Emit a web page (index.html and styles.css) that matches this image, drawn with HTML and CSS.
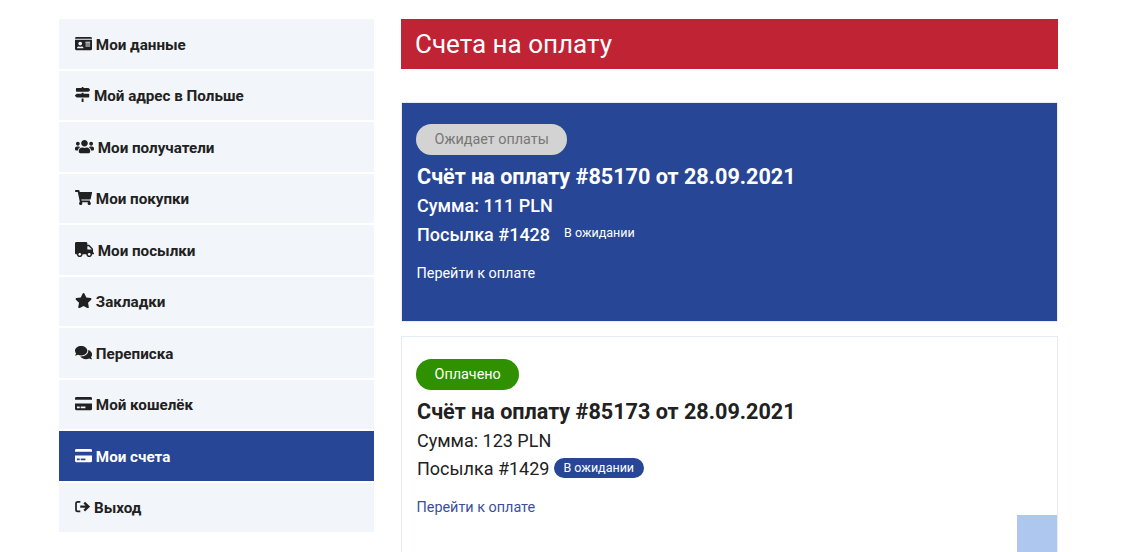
FILE: index.html
```html
<!DOCTYPE html>
<html lang="ru">
<head>
<meta charset="utf-8">
<title>Счета на оплату</title>
<link rel="stylesheet" href="styles.css">
</head>
<body>
<div class="layout">
  <nav class="side">
    <a class="item"><svg class="ic" viewBox="0 0 576 512"><path d="M528 32H48C21.5 32 0 53.5 0 80v16h576V80c0-26.5-21.5-48-48-48zM0 432c0 26.5 21.5 48 48 48h480c26.5 0 48-21.5 48-48V128H0v304zm352-232c0-4.4 3.6-8 8-8h144c4.4 0 8 3.6 8 8v16c0 4.4-3.6 8-8 8H360c-4.4 0-8-3.6-8-8v-16zm0 64c0-4.4 3.6-8 8-8h144c4.4 0 8 3.6 8 8v16c0 4.4-3.6 8-8 8H360c-4.4 0-8-3.6-8-8v-16zm0 64c0-4.4 3.6-8 8-8h144c4.4 0 8 3.6 8 8v16c0 4.4-3.6 8-8 8H360c-4.4 0-8-3.6-8-8v-16zM176 192c35.3 0 64 28.7 64 64s-28.7 64-64 64-64-28.7-64-64 28.7-64 64-64zM67.1 396.2C75.5 370.5 99.6 352 128 352h8.2c12.3 5.1 25.7 8 39.8 8s27.6-2.9 39.8-8h8.2c28.4 0 52.5 18.5 60.9 44.2 3.2 9.9-5.2 19.8-15.6 19.8H82.7c-10.4 0-18.8-10-15.6-19.8z"/></svg> Мои данные</a>
    <a class="item"><svg class="ic" viewBox="0 0 512 512"><path d="M507.31 84.69L464 41.37c-6-6-14.14-9.37-22.63-9.37H288V16c0-8.84-7.16-16-16-16h-32c-8.84 0-16 7.16-16 16v16H56c-13.25 0-24 10.75-24 24v80c0 13.25 10.75 24 24 24h385.37c8.49 0 16.62-3.37 22.63-9.37l43.31-43.31c6.25-6.26 6.25-16.38 0-22.63zM224 496c0 8.84 7.16 16 16 16h32c8.84 0 16-7.16 16-16V384h-64v112zm232-272H288v-32h-64v32H70.63c-8.49 0-16.62 3.37-22.63 9.37L4.69 276.69c-6.25 6.25-6.25 16.38 0 22.63L48 342.63c6 6 14.14 9.37 22.63 9.37H456c13.25 0 24-10.75 24-24v-80c0-13.25-10.75-24-24-24z"/></svg> Мой адрес в Польше</a>
    <a class="item"><svg class="ic" viewBox="0 0 640 512"><path d="M96 224c35.3 0 64-28.7 64-64s-28.7-64-64-64-64 28.7-64 64 28.7 64 64 64zm448 0c35.3 0 64-28.7 64-64s-28.7-64-64-64-64 28.7-64 64 28.7 64 64 64zm32 32h-64c-17.6 0-33.5 7.1-45.1 18.6 40.3 22.1 68.9 62 75.1 109.4h66c17.7 0 32-14.3 32-32v-32c0-35.3-28.7-64-64-64zm-256 0c61.9 0 112-50.1 112-112S381.9 32 320 32 208 82.1 208 144s50.1 112 112 112zm76.8 32h-8.3c-20.8 10-43.9 16-68.5 16s-47.6-6-68.5-16h-8.3C179.6 288 128 339.6 128 403.2V432c0 26.5 21.5 48 48 48h288c26.5 0 48-21.5 48-48v-28.8c0-63.6-51.6-115.2-115.2-115.2zm-223.7-13.4C161.5 263.1 145.6 256 128 256H64c-35.3 0-64 28.7-64 64v32c0 17.7 14.3 32 32 32h65.9c6.3-47.4 34.9-87.3 75.2-109.4z"/></svg> Мои получатели</a>
    <a class="item"><svg class="ic" viewBox="0 0 576 512"><path d="M528.12 301.319l47.273-208C578.806 78.301 567.391 64 551.99 64H159.208l-9.166-44.81C147.758 8.021 137.93 0 126.529 0H24C10.745 0 0 10.745 0 24v16c0 13.255 10.745 24 24 24h69.883l70.248 343.435C147.325 417.1 136 435.222 136 456c0 30.928 25.072 56 56 56s56-25.072 56-56c0-15.674-6.447-29.835-16.824-40h209.647C430.447 426.165 424 440.326 424 456c0 30.928 25.072 56 56 56s56-25.072 56-56c0-22.172-12.888-41.332-31.579-50.405l5.517-24.276c3.413-15.018-8.002-29.319-23.403-29.319H218.117l-6.545-32h293.145c11.206 0 20.92-7.754 23.403-18.681z"/></svg> Мои покупки</a>
    <a class="item"><svg class="ic" viewBox="0 0 640 512"><path d="M624 352h-16V243.9c0-12.7-5.1-24.9-14.1-33.9L494 110.1c-9-9-21.2-14.1-33.9-14.1H416V48c0-26.5-21.5-48-48-48H48C21.5 0 0 21.5 0 48v320c0 26.5 21.5 48 48 48h16c0 53 43 96 96 96s96-43 96-96h128c0 53 43 96 96 96s96-43 96-96h48c8.8 0 16-7.2 16-16v-32c0-8.8-7.2-16-16-16zM160 464c-26.5 0-48-21.5-48-48s21.5-48 48-48 48 21.5 48 48-21.5 48-48 48zm320 0c-26.5 0-48-21.5-48-48s21.5-48 48-48 48 21.5 48 48-21.5 48-48 48zm80-208H416V144h44.1l99.9 99.9V256z"/></svg> Мои посылки</a>
    <a class="item"><svg class="ic" viewBox="0 0 576 512"><path d="M259.3 17.8L194 150.2 47.9 171.5c-26.2 3.8-36.7 36.1-17.7 54.6l105.7 103-25 145.5c-4.5 26.3 23.2 46 46.4 33.7L288 439.6l130.7 68.7c23.2 12.2 50.9-7.4 46.4-33.7l-25-145.5 105.7-103c19-18.5 8.5-50.8-17.7-54.6L382 150.2 316.7 17.8c-11.7-23.6-45.6-23.9-57.4 0z"/></svg> Закладки</a>
    <a class="item"><svg class="ic" viewBox="0 0 576 512"><path d="M416 192c0-88.4-93.1-160-208-160S0 103.6 0 192c0 34.3 14.1 65.9 38 92-13.4 30.2-35.5 54.2-35.8 54.5-2.2 2.3-2.8 5.7-1.5 8.7S4.8 352 8 352c36.6 0 66.9-12.3 88.7-25 32.2 15.7 70.3 25 111.3 25 114.9 0 208-71.6 208-160zm122 220c23.9-26 38-57.7 38-92 0-66.9-53.5-124.2-129.3-148.1.9 6.6 1.3 13.3 1.3 20.1 0 105.9-107.7 192-240 192-10.8 0-21.3-.8-31.7-1.9C207.8 439.6 281.8 480 368 480c41 0 79.1-9.2 111.3-25 21.8 12.7 52.1 25 88.7 25 3.2 0 6.1-1.9 7.3-4.8 1.3-2.9.7-6.3-1.5-8.7-.3-.3-22.4-24.2-35.8-54.5z"/></svg> Переписка</a>
    <a class="item"><svg class="ic" viewBox="0 0 576 512"><path d="M0 432c0 26.5 21.5 48 48 48h480c26.5 0 48-21.5 48-48V256H0v176zm192-68c0-6.6 5.4-12 12-12h136c6.6 0 12 5.4 12 12v40c0 6.6-5.4 12-12 12H204c-6.6 0-12-5.4-12-12v-40zm-128 0c0-6.6 5.4-12 12-12h72c6.6 0 12 5.4 12 12v40c0 6.6-5.4 12-12 12H76c-6.6 0-12-5.4-12-12v-40zM576 80v48H0V80c0-26.5 21.5-48 48-48h480c26.5 0 48 21.5 48 48z"/></svg> Мой кошелёк</a>
    <a class="item active"><svg class="ic" viewBox="0 0 576 512"><path d="M0 432c0 26.5 21.5 48 48 48h480c26.5 0 48-21.5 48-48V256H0v176zm192-68c0-6.6 5.4-12 12-12h136c6.6 0 12 5.4 12 12v40c0 6.6-5.4 12-12 12H204c-6.6 0-12-5.4-12-12v-40zm-128 0c0-6.6 5.4-12 12-12h72c6.6 0 12 5.4 12 12v40c0 6.6-5.4 12-12 12H76c-6.6 0-12-5.4-12-12v-40zM576 80v48H0V80c0-26.5 21.5-48 48-48h480c26.5 0 48 21.5 48 48z"/></svg> Мои счета</a>
    <a class="item"><svg class="ic ic-exit" viewBox="0 0 512 512"><path d="M180 96H90C58 96 34 120 34 152v208c0 32 24 56 56 56h90"/><path class="ic-arrow" d="M176 256h270M312 122l140 134-140 134"/></svg> Выход</a>
  </nav>
  <main class="main">
    <h1 class="head">Счета на оплату</h1>
    <section class="card card-blue">
      <span class="pill pill-wait">Ожидает оплаты</span>
      <h2 class="title">Счёт на оплату #85170 от 28.09.2021</h2>
      <p class="sum">Сумма: 111 PLN</p>
      <p class="parcel">Посылка #1428 <span class="tag">В ожидании</span></p>
      <a class="pay">Перейти к оплате</a>
    </section>
    <section class="card">
      <span class="pill pill-paid">Оплачено</span>
      <h2 class="title">Счёт на оплату #85173 от 28.09.2021</h2>
      <p class="sum">Сумма: 123 PLN</p>
      <p class="parcel">Посылка #1429 <span class="tag">В ожидании</span></p>
      <a class="pay">Перейти к оплате</a>
    </section>
  </main>
</div>
<div class="totop"></div>
</body>
</html>
```
FILE: styles.css
```css
* { box-sizing: border-box; }
html, body { margin: 0; height: 552px; overflow: hidden; }
body { background: #fff; color: #212121; font-family: Roboto, "Noto Sans", sans-serif; position: relative; }
.layout { display: grid; grid-template-columns: 315px 657px; column-gap: 27px; padding: 19px 0 0 59px; }
.side { display: flex; flex-direction: column; gap: 2px; }
.item { display: block; height: 49.5px; padding: 0.9px 0 0 16px; line-height: 51px; background: #f2f5f9; color: #212121; font-size: 15.2px; font-weight: 700; white-space: nowrap; overflow: hidden; }
.item.active { background: #274695; color: #fff; }
.ic { height: 15.2px; width: auto; fill: currentColor; vertical-align: -1px; }
.ic-exit { fill: none; stroke: currentColor; stroke-width: 58; }
.ic-arrow { stroke-width: 76; }
.main { min-width: 0; }
.head { margin: 0 0 33px; height: 50px; padding-left: 14px; line-height: 50px; background: #c02333; color: #fff; font-size: 26px; font-weight: 400; }
.card { height: 220px; margin-bottom: 14px; padding: 22px 14px 0; border: 1px solid #e6ecf7; background: #fff; }
.card-blue { background: #274695; color: #fff; padding-top: 21px; }
.pill { display: inline-block; height: 31px; padding: 0 18.5px; border-radius: 15.5px; line-height: 31px; font-size: 14.4px; vertical-align: top; }
.pill-wait { background: #d3d3d3; color: #777; }
.pill-paid { background: #2f9000; color: #fff; }
.title { margin: 7px 0 0 1px; font-size: 21.6px; line-height: 30px; font-weight: 700; white-space: nowrap; }
.sum { margin: 1px 0 0 1px; font-size: 18px; line-height: 25px; }
.parcel { margin: 3px 0 0 1px; font-size: 18px; line-height: 25px; }
.card-blue .sum { font-weight: 500; }
.card-blue .parcel { margin-top: 4px; font-weight: 500; }
.tag { display: inline-block; height: 20px; padding: 0 9.5px; border-radius: 10px; background: #274695; color: #fff; font-size: 12.5px; font-weight: 400; line-height: 20px; vertical-align: 3px; }
.card-blue .tag { vertical-align: 4px; }
.pay { display: block; margin: 16px 0 0 0.5px; font-size: 14.4px; line-height: 22px; color: #3a4f9c; }
.card-blue .pay { color: #fff; }
.totop { position: absolute; left: 1017px; top: 515px; width: 40px; height: 37px; background: #aec7ef; }
```
